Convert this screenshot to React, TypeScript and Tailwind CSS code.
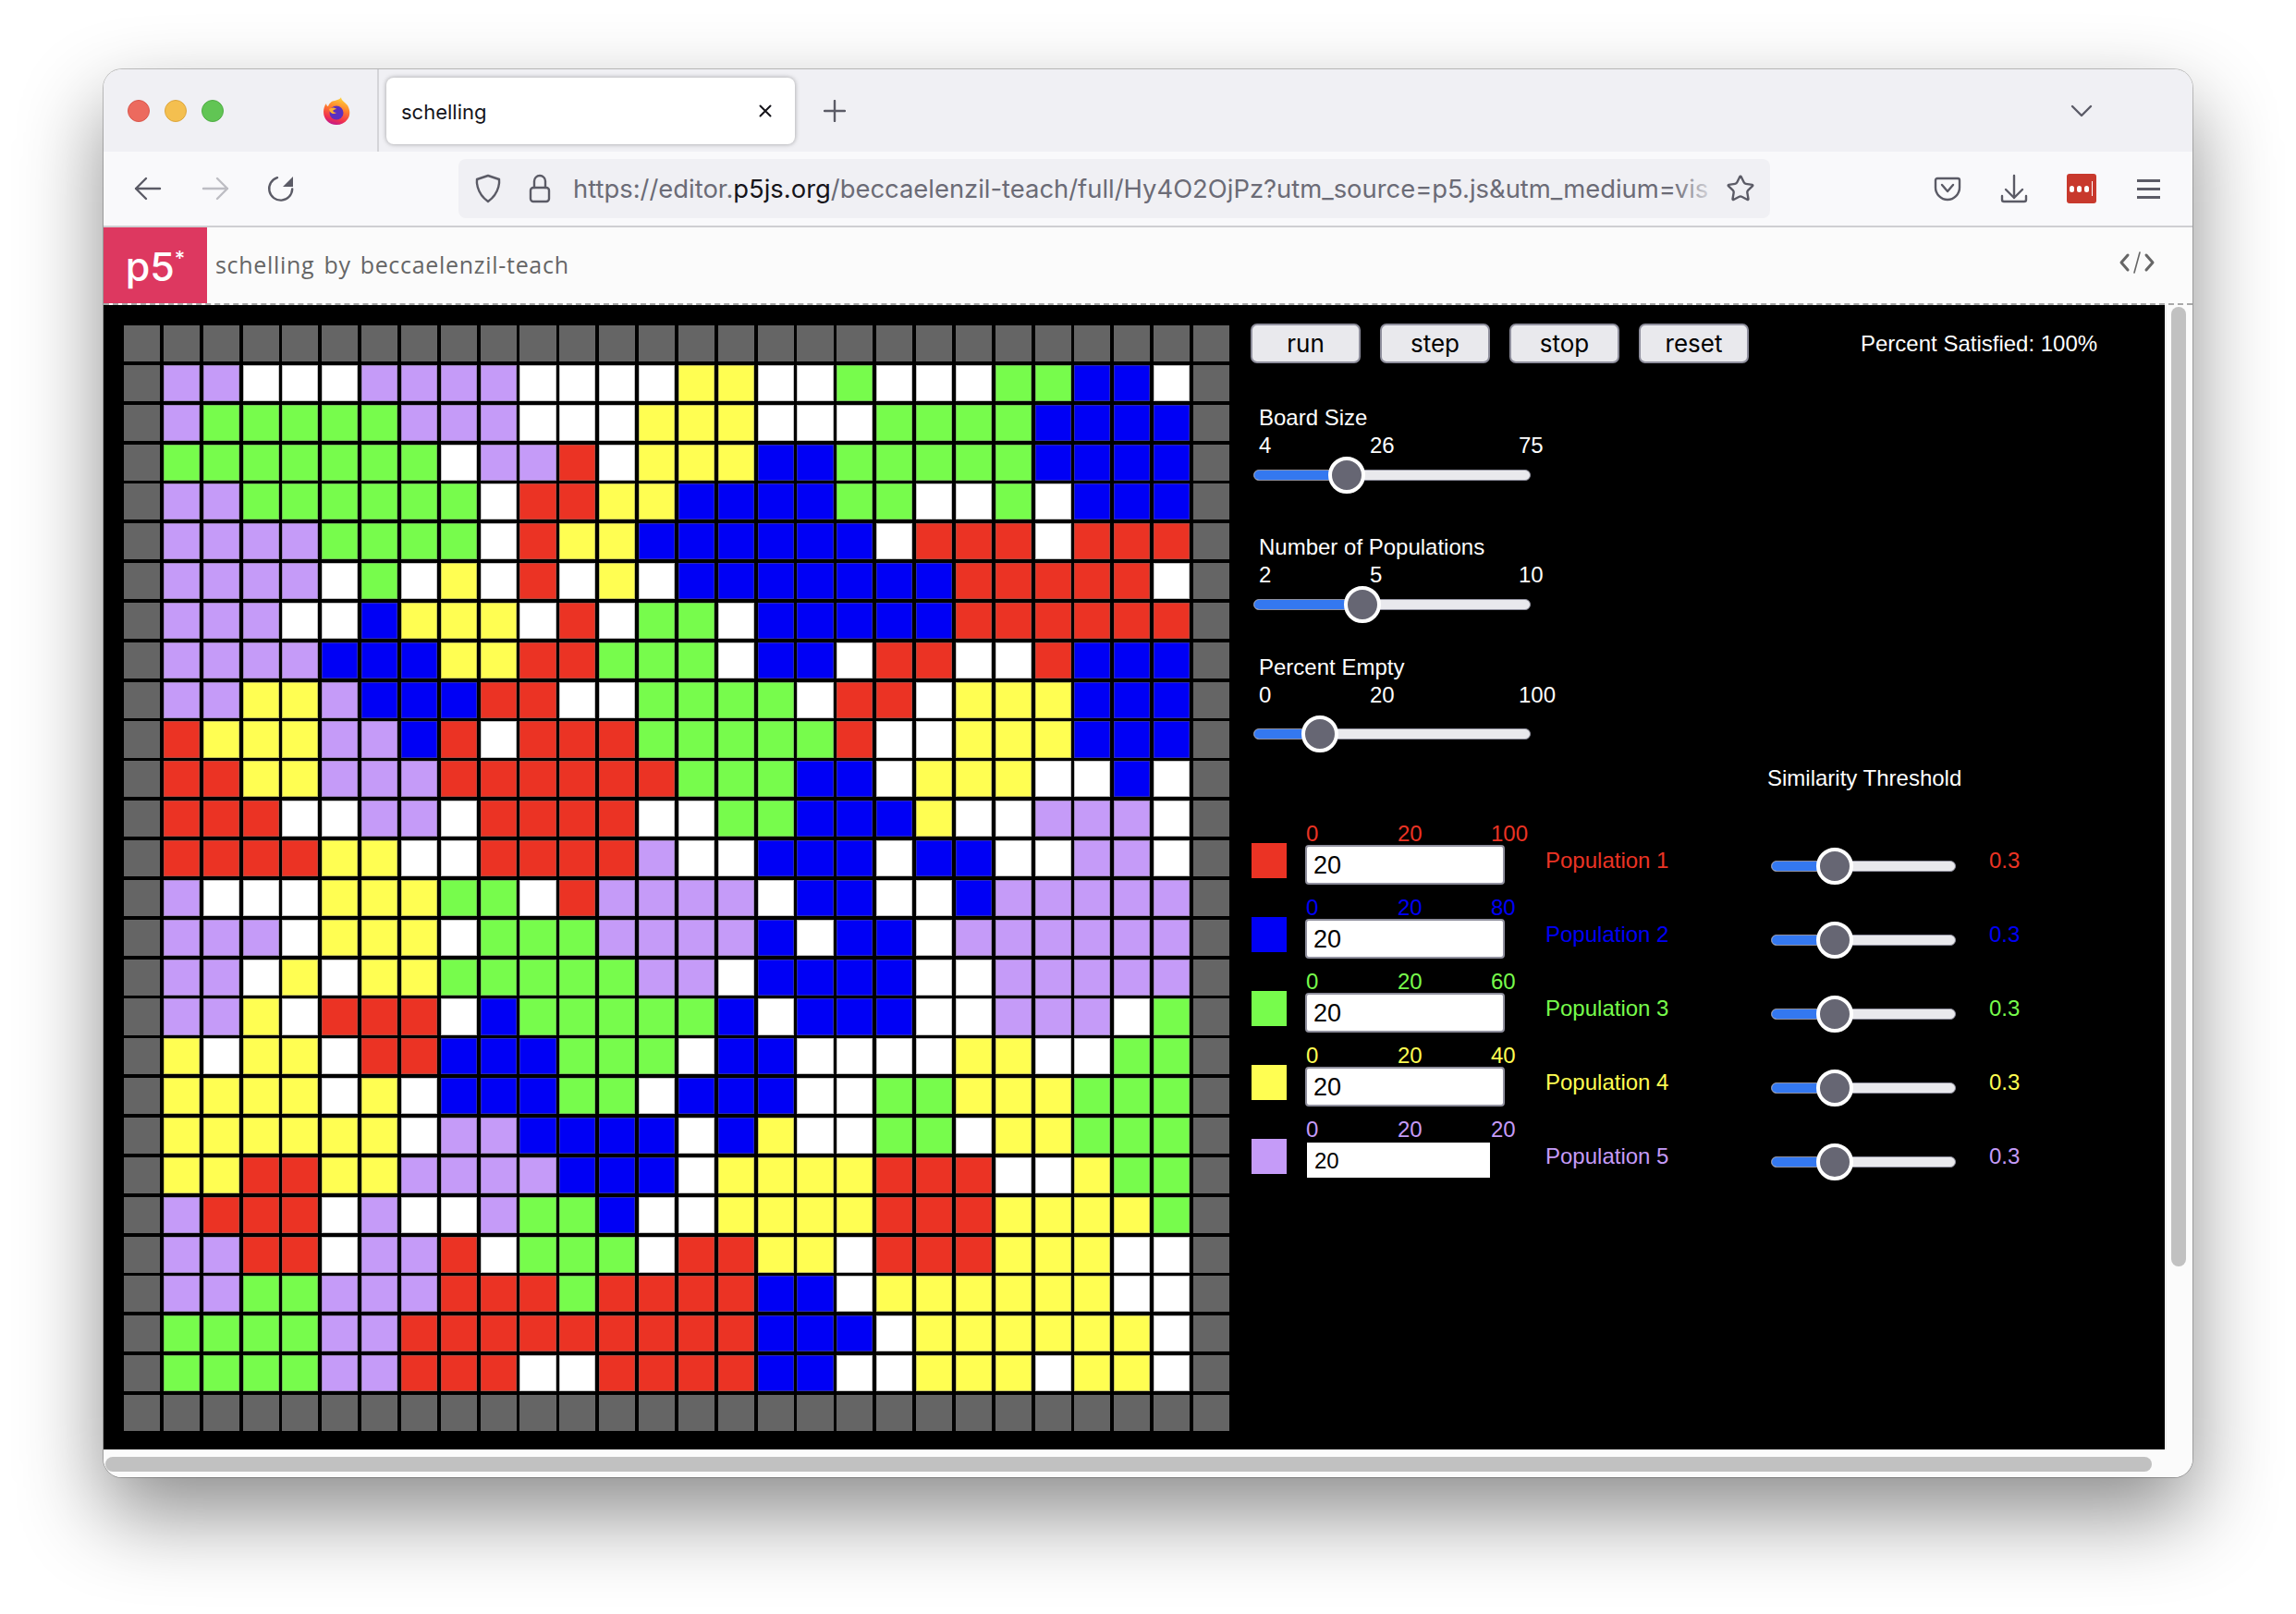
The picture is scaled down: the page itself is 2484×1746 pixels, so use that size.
import { Star } from "lucide-react";

const BOARD = [
	"PPWWWPPPPWWWWYYWWGWWWGGBBW",
	"PGGGGGPPPWWWYYYWWWGGGGBBBB",
	"GGGGGGGWPPRWYYYBBGGGGGBBBB",
	"PPGGGGGGWRRYYBBBBGGWWGWBBB",
	"PPPPGGGGWRYYBBBBBBWRRRWRRR",
	"PPPPWGWYWRWYWBBBBBBBRRRRRW",
	"PPPWWBYYYWRWGGWBBBBBRRRRRR",
	"PPPPBBBYYRRGGGWBBWRRWWRBBB",
	"PPYYPBBBRRWWGGGGWRRWYYYBBB",
	"RYYYPPBRWRRRGGGGGRWWYYYBBB",
	"RRYYPPPRRRRRRGGGBBWYYYWWBW",
	"RRRWWPPWRRRRWWGGBBBYWWPPPW",
	"RRRRYYWWRRRRPWWBBBWBBWWPPW",
	"PWWWYYYGGWRPPPPWBBWWBPPPPP",
	"PPPWYYYWGGGPPPPBWBBWPPPPPP",
	"PPWYWYYGGGGGPPWBBBBWWPPPPP",
	"PPYWRRRWBGGGGGBWBBBWWPPPWG",
	"YWYYWRRBBBGGGWBBWWWWYYWWGG",
	"YYYYWYWBBBGGWBBBWWGGYYYGGG",
	"YYYYYYWPPBBBBWBYWWGGWYYGGG",
	"YYRRYYPPPPBBBWYYYYRRRWWYGG",
	"PRRRWPWWPGGBWWYYYYRRRYYYYG",
	"PPRRWPPRWGGGWRRYYWRRRYYYWW",
	"PPGGPPPRRRGRRRRBBWYYYYYYWW",
	"GGGGPPRRRRRRRRRBBBWYYYYYYW",
	"GGGGPPRRRWWRRRRBBWWYYYWYYW",
];

const CELL_BG: Record<string, string> = {
	P: "bg-[#c59bf8]",
	G: "bg-[#77fc4c]",
	Y: "bg-[#fffe52]",
	R: "bg-[#eb3324]",
	B: "bg-[#0000f5]",
	W: "bg-white",
	X: "bg-[#656565]",
};

const POPULATIONS = [
	{ label: "Population 1", max: "100", swatch: "bg-[#eb3324]", text: "text-[#eb3324]" },
	{ label: "Population 2", max: "80", swatch: "bg-[#0000f5]", text: "text-[#0000f5]" },
	{ label: "Population 3", max: "60", swatch: "bg-[#77fc4c]", text: "text-[#77fc4c]" },
	{ label: "Population 4", max: "40", swatch: "bg-[#fffe52]", text: "text-[#fffe52]" },
	{ label: "Population 5", max: "20", swatch: "bg-[#c59bf8]", text: "text-[#c59bf8]" },
];

const SANS = "font-['Liberation_Sans',Arial,sans-serif]";
const UI = "font-['Inter',sans-serif]";

const gridRows = [
	"X".repeat(28),
	...BOARD.map((row) => `X${row}X`),
	"X".repeat(28),
];

const Board = () => (
	<div className="mt-[2px] grid h-[1196px] w-[1196px] shrink-0 grid-cols-[repeat(28,1fr)] grid-rows-[repeat(28,1fr)] gap-[3.8px]">
		{gridRows.flatMap((row, y) =>
			row.split("").map((c, x) => (
				<div key={`${x}-${y}`} className={`border border-[#666666]/40 ${CELL_BG[c]}`} />
			)),
		)}
	</div>
);

const Range = ({ width, at }: { width: number; at: number }) => (
	<div className="relative h-[12px] rounded-full border border-[#8f8f9d] bg-[#e9e9ed]" style={{ width }}>
		<div className="h-full rounded-l-full bg-[#3478f0]" style={{ width: at }} />
		<div
			className="absolute top-1/2 h-[40px] w-[40px] -translate-x-1/2 -translate-y-1/2 rounded-full border-[4px] border-white bg-[#666673]"
			style={{ left: at }}
		/>
	</div>
);

const SliderBlock = ({
	title,
	min,
	value,
	max,
	at,
	className,
	trackGap = "",
}: {
	title: string;
	min: string;
	value: string;
	max: string;
	at: number;
	className: string;
	trackGap?: string;
}) => (
	<div className={className}>
		<div className="ml-[9px] h-[30px] text-[24px] leading-[30px]">{title}</div>
		<div className="ml-[9px] flex h-[30px] text-[24px] leading-[30px]">
			<span className="w-[120px]">{min}</span>
			<span className="w-[161px]">{value}</span>
			<span>{max}</span>
		</div>
		<div className={`ml-[3px] flex h-[34px] items-center ${trackGap}`}>
			<Range width={300} at={at} />
		</div>
	</div>
);

const PopulationRow = ({ pop, last }: { pop: (typeof POPULATIONS)[number]; last: boolean }) => (
	<div className={`flex h-[80px] text-[24px] leading-[30px] ${pop.text}`}>
		<div className={`ml-[1px] mt-[25px] h-[38px] w-[38px] shrink-0 ${pop.swatch}`} />
		<div className="ml-[20px] w-[216px] shrink-0">
			<div className="flex h-[27px] whitespace-nowrap pl-[1px]">
				<span className="w-[99px] shrink-0">0</span>
				<span className="w-[101px] shrink-0">20</span>
				<span className="shrink-0">{pop.max}</span>
			</div>
			{last ? (
				<input
					readOnly
					defaultValue="20"
					className={`ml-[2px] mt-[2px] h-[38px] w-[198px] bg-white pl-[8px] pt-[2px] text-[24px] text-black ${SANS}`}
				/>
			) : (
				<input
					readOnly
					defaultValue="20"
					className={`h-[43px] w-[216px] rounded-[4px] border-2 border-[#8f8f9d] bg-white pl-[7px] pt-[2px] text-[27px] text-black ${SANS}`}
				/>
			)}
		</div>
		<div className="ml-[44px] mt-[29px] w-[244px] shrink-0 whitespace-nowrap">{pop.label}</div>
		<div className="mt-[33px] flex h-[34px] w-[200px] shrink-0 items-center">
			<Range width={200} at={68} />
		</div>
		<div className="ml-[36px] mt-[29px]">0.3</div>
	</div>
);

const Controls = () => (
	<div className={`ml-[23px] w-[960px] shrink-0 text-white ${SANS}`}>
		<div className="flex h-[43px] items-center">
			{["run", "step", "stop", "reset"].map((name) => (
				<button
					key={name}
					type="button"
					className={`mr-[21px] h-[43px] w-[119px] rounded-[7px] border-2 border-[#8f8f9d] bg-[#e9e9ed] text-[26px] text-black ${UI}`}
				>
					{name}
				</button>
			))}
			<span className="ml-[100px] whitespace-nowrap text-[24px]">Percent Satisfied: 100%</span>
		</div>
		<SliderBlock className="mt-[44px]" title="Board Size" min="4" value="26" max="75" at={100} />
		<SliderBlock className="mt-[46px]" title="Number of Populations" min="2" value="5" max="10" at={117} />
		<SliderBlock className="mt-[36px]" title="Percent Empty" min="0" value="20" max="100" at={71} trackGap="mt-[10px]" />
		<div className="ml-[559px] mt-[16px] h-[30px] text-[24px] leading-[30px]">Similarity Threshold</div>
		<div className="mt-[30px]">
			{POPULATIONS.map((pop, i) => (
				<PopulationRow key={pop.label} pop={pop} last={i === POPULATIONS.length - 1} />
			))}
		</div>
	</div>
);

const FirefoxLogo = () => (
	<svg width="32" height="32" viewBox="0 0 32 32" className="ml-[106px] shrink-0">
		<defs>
			<linearGradient id="ffBody" x1="0.7" y1="0" x2="0.4" y2="1">
				<stop offset="0" stopColor="#ffd93a" />
				<stop offset="0.45" stopColor="#ff7a2e" />
				<stop offset="0.8" stopColor="#f0304f" />
				<stop offset="1" stopColor="#c2188b" />
			</linearGradient>
		</defs>
		<path d="M21 1c0 4 4 5 7 9 3 5 3 11 0 15-3 4-7 6-12 6C8 31 2 25 2 17c0-3 1-7 3-9 0 2 1 3 2 3 1-3 4-6 7-6 2-1 6-1 7-4z" fill="url(#ffBody)" />
		<circle cx="16" cy="18" r="7.5" fill="#5a2fc0" />
		<path d="M8 14c3-2 6-2 8 0-2 0-3 1-4 2 1 1 2 2 4 2-3 2-7 1-8-4z" fill="#ffb02e" />
	</svg>
);

const Icon = ({ className, w, h, children }: { className?: string; w: number; h: number; children: React.ReactNode }) => (
	<svg
		width={w}
		height={h}
		viewBox={`0 0 ${w} ${h}`}
		fill="none"
		stroke="#5b5b66"
		strokeWidth="2.4"
		strokeLinecap="round"
		strokeLinejoin="round"
		className={`shrink-0 ${className ?? ""}`}
	>
		{children}
	</svg>
);

const TabStrip = () => (
	<div className="flex h-[89px] shrink-0 items-center bg-[#f0f0f4]">
		<div className="ml-[26px] h-[24px] w-[24px] shrink-0 rounded-full border border-[#d9574c] bg-[#ec6a5e]" />
		<div className="ml-[16px] h-[24px] w-[24px] shrink-0 rounded-full border border-[#dca63e] bg-[#f4bf4f]" />
		<div className="ml-[16px] h-[24px] w-[24px] shrink-0 rounded-full border border-[#50ad45] bg-[#61c554]" />
		<FirefoxLogo />
		<div className="ml-[28px] h-full w-[2px] shrink-0 bg-[#d4d4d8]" />
		<div className="ml-[8px] flex h-[72px] w-[442px] shrink-0 items-center rounded-[8px] bg-white pl-[16px] pr-[25px] shadow-[0_0_5px_rgba(0,0,0,0.35)]">
			<span className={`mt-[4px] text-[22px] text-[#15141a] ${UI}`}>schelling</span>
			<Icon w={14} h={14} className="ml-auto">
				<path d="M1.5 1.5l11 11M12.5 1.5l-11 11" stroke="#15141a" strokeWidth="2" />
			</Icon>
		</div>
		<Icon w={24} h={24} className="ml-[31px]">
			<path d="M12 1v22M1 12h22" />
		</Icon>
		<Icon w={24} h={14} className="ml-[1325px]">
			<path d="M2 2l10 10L22 2" />
		</Icon>
	</div>
);

const Toolbar = () => (
	<div className="flex h-[80px] shrink-0 items-center bg-[#f9f9fb]">
		<Icon w={30} h={26} className="ml-[33px]">
			<path d="M2 13h26M13 2L2 13l11 11" />
		</Icon>
		<Icon w={30} h={26} className="ml-[43px]">
			<path d="M2 13h26M17 2l11 11-11 11" stroke="#bdbdc3" />
		</Icon>
		<Icon w={32} h={30} className="ml-[41px]">
			<path d="M11 3.2a12.5 12.5 0 1 0 16.2 12.3" />
			<path d="M28 2v11H17z" fill="#5b5b66" stroke="none" />
		</Icon>
		<div className="ml-[175px] flex h-[64px] w-[1419px] shrink-0 items-center rounded-[8px] bg-[#f0f0f4] pl-[17px]">
			<Icon w={30} h={32}>
				<path d="M15 2L3 6c0 0-2 14 12 24C29 20 27 6 27 6z" />
			</Icon>
			<Icon w={24} h={32} className="ml-[29px]">
				<rect x="2" y="15" width="20" height="15" rx="3" />
				<path d="M6 15V8a6 6 0 0 1 12 0v7" />
			</Icon>
			<div className={`relative ml-[24px] w-[1240px] shrink-0 whitespace-nowrap pt-[2px] text-[27.4px] text-[#6b6b76] ${UI}`}>
				https://editor.<span className="text-[#15141a]">p5js.org</span>/beccaelenzil-teach/full/Hy4O2OjPz?utm_source=p5.js&utm_medium=vis
				<div className="absolute inset-y-0 right-0 w-[50px] bg-gradient-to-r from-transparent to-[#f0f0f4]" />
			</div>
			<Star size={32} strokeWidth={1.8} color="#5b5b66" className="ml-[7px] shrink-0" />
		</div>
		<Icon w={30} h={28} className="ml-[177px]">
			<path d="M4 3h22a2 2 0 0 1 2 2v8c0 7-6 13-13 13S2 20 2 13V5a2 2 0 0 1 2-2z" />
			<path d="M9 10l6 7 6-7" />
		</Icon>
		<Icon w={30} h={32} className="ml-[42px]">
			<path d="M15 2v24M6 17l9 9 9-9" />
			<path d="M2 24v4a2 2 0 0 0 2 2h22a2 2 0 0 0 2-2v-4" />
		</Icon>
		<div className="ml-[42px] flex h-[32px] w-[32px] shrink-0 items-center rounded-[3px] bg-[#c8392d] pl-[3px]">
			<span className="h-[7px] w-[5px] rounded-full bg-white" />
			<span className="ml-[3px] h-[7px] w-[5px] rounded-full bg-white" />
			<span className="ml-[3px] h-[7px] w-[5px] rounded-full bg-white" />
			<span className="ml-[3px] h-[16px] w-[1px] bg-white" />
		</div>
		<div className="ml-[44px] flex w-[25px] shrink-0 flex-col gap-[6px]">
			<span className="h-[3px] bg-[#5b5b66]" />
			<span className="h-[3px] bg-[#5b5b66]" />
			<span className="h-[3px] bg-[#5b5b66]" />
		</div>
	</div>
);

const SketchHeader = () => (
	<div className="flex h-[82px] shrink-0 items-center bg-[#fbfbfb]">
		<div className={`flex h-full w-[112px] shrink-0 items-center justify-center bg-[#dd3860] pt-[2px] text-white ${UI}`}>
			<span className="text-[43px] font-medium leading-none">p5</span>
			<span className="mb-[18px] text-[22px] font-medium leading-none">*</span>
		</div>
		<div className={`ml-[9px] flex gap-[10px] text-[25px] tracking-[0.7px] text-[#666666] font-['Open_Sans',sans-serif]`}>
			<span>schelling</span>
			<span>by</span>
			<span>beccaelenzil-teach</span>
		</div>
		<Icon w={40} h={24} className="mb-[6px] ml-auto mr-[40px]">
			<path d="M10 4L3 12l7 8M30 4l7 8-7 8" stroke="#666666" strokeWidth="3" />
			<path d="M23 1l-6 22" stroke="#666666" strokeWidth="1.6" />
		</Icon>
	</div>
);

export default function App() {
	return (
		<div className="h-[1746px] w-[2484px] overflow-hidden bg-white pl-[112px] pt-[75px]">
			<div className="flex h-[1523px] w-[2260px] flex-col overflow-hidden rounded-[20px] shadow-[0_0_0_1px_rgba(0,0,0,0.22),0_40px_90px_rgba(0,0,0,0.45)]">
				<TabStrip />
				<Toolbar />
				<div className="h-[2px] shrink-0 bg-[#cfcfd2]" />
				<SketchHeader />
				<div className="h-[2px] shrink-0 border-t-2 border-dashed border-[#a8a8a8] bg-[#fbfbfb]" />
				<div className="flex h-[1238px] shrink-0 bg-[#fbfbfb]">
					<div className="flex w-[2230px] shrink-0 bg-black pl-[22px] pt-[20px]">
						<Board />
						<Controls />
					</div>
					<div className="w-[30px] shrink-0 border-l-2 border-[#eeeeee] pl-[5px] pt-[2px]">
						<div className="h-[1038px] w-[16px] rounded-full bg-[#c1c1c1]" />
					</div>
				</div>
				<div className="h-[30px] shrink-0 bg-[#fbfbfb] pl-[2px] pt-[8px]">
					<div className="h-[16px] w-[2214px] rounded-full bg-[#c1c1c1]" />
				</div>
			</div>
		</div>
	);
}
